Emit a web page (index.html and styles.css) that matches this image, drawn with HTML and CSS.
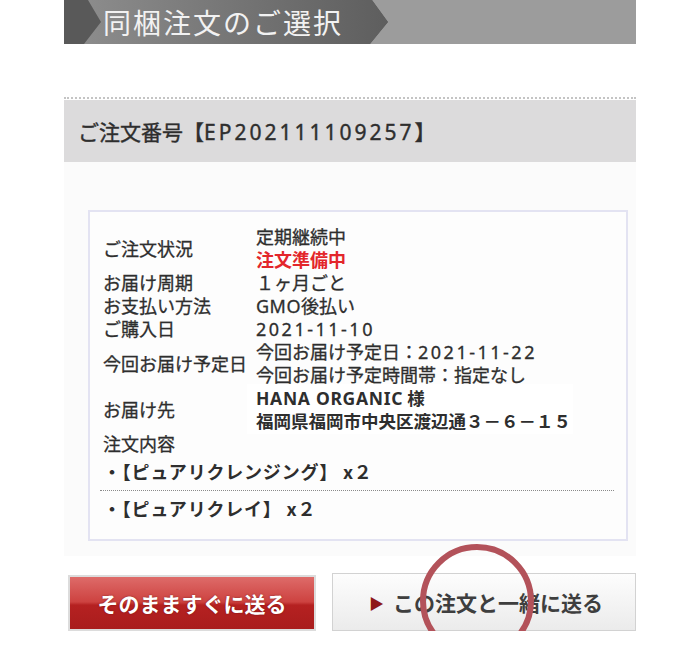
FILE: index.html
```html
<!DOCTYPE html>
<html lang="ja">
  <head>
    <meta charset="UTF-8" />
    <meta name="viewport" content="width=device-width, initial-scale=1.0" />
    <title>同梱注文のご選択</title>
    <link rel="stylesheet" href="styles.css">
  </head>
  <body>
    <div class="page">
      <div class="title-bar">
        <div class="title-bar__tab">
          <h1 class="title-bar__text">同梱注文のご選択</h1>
        </div>
      </div>

      <div class="order">
        <div class="order__head">ご注文番号【<span class="latin">EP202111109257</span>】</div>
        <div class="order__body">
          <div class="order__box">
            <div class="info">
              <div class="info__label">ご注文状況</div>
              <div class="info__value">定期継続中<br><span class="is-red">注文準備中</span></div>

              <div class="info__label">お届け周期</div>
              <div class="info__value">１ヶ月ごと</div>

              <div class="info__label">お支払い方法</div>
              <div class="info__value"><span class="latin latin--tight">GMO</span>後払い</div>

              <div class="info__label">ご購入日</div>
              <div class="info__value"><span class="latin">2021-11-10</span></div>

              <div class="info__label">今回お届け予定日</div>
              <div class="info__value">今回お届け予定日：<span class="latin">2021-11-22</span><br>今回お届け予定時間帯：指定なし</div>

              <div class="info__label">お届け先</div>
              <div class="info__value">
                <div class="address"><span class="latin">HANA ORGANIC</span> 様<br>福岡県福岡市中央区渡辺通３－６－１５</div>
              </div>

              <div class="info__label info__label--wide">注文内容</div>
            </div>
            <ul class="items">
              <li class="items__row">・【ピュアリクレンジング】 x２</li>
              <li class="items__row">・【ピュアリクレイ】 x２</li>
            </ul>
          </div>
        </div>
      </div>

      <div class="actions">
        <a class="btn btn--red" href="#">そのまますぐに送る</a>
        <a class="btn btn--gray" href="#"><span class="btn__arrow">▶</span>この注文と一緒に送る</a>
        <span class="marker"></span>
      </div>
    </div>
  </body>
</html>
```

FILE: styles.css
```css
body {
  margin: 0;
  background-color: #fff;
  color: #2e2e2e;
  font-family: "Noto Sans CJK JP", sans-serif;
}

.page {
  width: 572px;
  margin-left: 64px;
}

/* title */
.title-bar {
  height: 44px;
  background-color: #9c9c9c;
}

.title-bar__tab {
  position: relative;
  width: 324px;
  height: 44px;
  background-color: #595959;
  clip-path: polygon(0 0, 308px 0, 324px 22px, 306px 44px, 0 44px);
}

.title-bar__tab::before {
  content: "";
  position: absolute;
  top: 0;
  left: 0;
  right: 0;
  bottom: 0;
  background: linear-gradient(90deg, #8f8f8f, #5e5e5e);
  clip-path: polygon(24px 0, 308px 0, 324px 22px, 306px 44px, 20px 44px, 37px 22px);
}

.title-bar__text {
  position: relative;
  margin: 0;
  padding-left: 39px;
  color: #f2f2f2;
  font-size: 28px;
  font-weight: 400;
  line-height: 44px;
  letter-spacing: 2px;
}

/* order panel */
.order {
  margin-top: 53px;
  border-top: 2px dotted #c4c4c4;
  padding-top: 1px;
}

.order__head {
  height: 62px;
  padding-left: 14px;
  background-color: #dcdbdc;
  font-size: 21px;
  line-height: 62px;
  -webkit-text-stroke: 0.4px #2e2e2e;
}

.order__head .latin {
  letter-spacing: 3px;
}

.order__body {
  padding: 48px 8px 15px 24px;
  background-color: #fbfbfb;
}

.order__box {
  padding: 13px 12px 19px 13px;
  border: 2px solid #e3e3f2;
  background-color: #fdfdfd;
}

.info {
  display: grid;
  grid-template-columns: 153px 1fr;
  align-items: center;
  font-size: 18px;
  line-height: 23px;
  -webkit-text-stroke: 0.3px #2e2e2e;
}

.info__label--wide {
  grid-column: 1 / 3;
}

.latin {
  font-family: "Noto Sans", "Noto Sans CJK JP", sans-serif;
  line-height: 1;
  letter-spacing: 2.5px;
}

.latin--tight {
  letter-spacing: 0.5px;
}

.is-red {
  color: #e3262b;
  font-weight: 700;
  -webkit-text-stroke: 0;
}

.address {
  width: fit-content;
  margin: -2px 0 -2px -9px;
  padding: 2px 2px 2px 9px;
  background-color: #fff;
  font-weight: 700;
  font-size: 17.5px;
  -webkit-text-stroke: 0;
}

.address .latin {
  letter-spacing: 0.7px;
}

.items {
  margin: 0 0 0 -3px;
  padding: 5px 0 0;
  list-style: none;
  font-size: 18px;
  font-weight: 700;
  line-height: 23px;
  letter-spacing: 0.8px;
}

.items__row {
  padding: 0 0 7px 3px;
}

.items__row + .items__row {
  padding-top: 6px;
  padding-bottom: 0;
  border-top: 1px dotted #8a8a8a;
}

/* buttons */
.actions {
  position: relative;
  display: flex;
  align-items: flex-start;
  gap: 16px;
  margin-top: 17px;
  padding-left: 4px;
}

.btn {
  display: flex;
  align-items: center;
  justify-content: center;
  height: 56px;
  font-size: 21px;
  font-weight: 700;
  text-decoration: none;
  box-sizing: border-box;
}

.btn--red {
  width: 248px;
  margin-top: 2px;
  border: 2px solid #dcdcdc;
  background: linear-gradient(#de6b69 0%, #cd4240 48%, #b52121 54%, #a91d1d 100%);
  color: #fff;
  text-shadow: 0 0 2px rgba(80, 0, 0, 0.6);
}

.btn--gray {
  flex: 1;
  height: 58px;
  border: 1px solid #d2d2d2;
  background: linear-gradient(#fdfdfd, #ebebeb);
  color: #3e3e3e;
  padding-left: 4px;
}

.btn__arrow {
  margin-right: 9px;
  color: #8e1818;
  font-size: 15px;
}

.marker {
  position: absolute;
  top: -29px;
  left: 356px;
  width: 102px;
  height: 102px;
  border: 6px solid #b3525a;
  border-radius: 50%;
}
```
